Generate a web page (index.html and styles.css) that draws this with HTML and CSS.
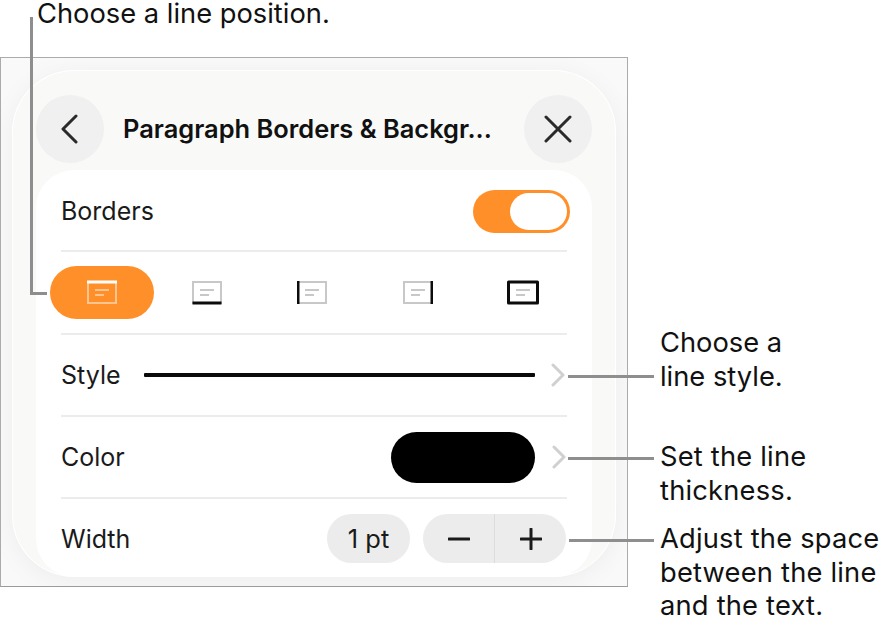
FILE: index.html
```html
<!DOCTYPE html>
<html lang="en">
<head>
<meta charset="utf-8">
<title>Paragraph Borders &amp; Background</title>
<link rel="stylesheet" href="styles.css">
</head>
<body>
<div class="page">
  <div class="frame">
    <div class="sheet">
      <header class="header">
        <button class="round-btn" aria-label="Back">
          <svg width="18" height="30" viewBox="0 0 18 30"><path d="M15 2 L2 15 L15 28" class="stroke-dark"/></svg>
        </button>
        <div class="title">Paragraph Borders &amp; Backgr...</div>
        <button class="round-btn" aria-label="Close">
          <svg width="28" height="28" viewBox="0 0 28 28"><path d="M2 2 L26 26 M26 2 L2 26" class="stroke-dark"/></svg>
        </button>
      </header>
      <div class="card">
        <div class="row row-first">
          <span class="label">Borders</span>
          <div class="toggle"><div class="knob"></div></div>
        </div>
        <div class="row row-icons">
          <div class="pos pos-active">
            <svg width="30" height="25" viewBox="0 0 30 25"><rect x="1" y="2" width="28" height="21" class="box-a"/><path d="M0 2 H30" class="edge-a"/><path d="M8 10 H22 M8 15 H17" class="txt-a"/></svg>
          </div>
          <div class="pos">
            <svg width="30" height="25" viewBox="0 0 30 25"><rect x="1" y="2" width="28" height="21" class="box"/><path d="M0.5 23 H29.5" class="edge"/><path d="M8 10 H22 M8 15 H17" class="txt"/></svg>
          </div>
          <div class="pos">
            <svg width="30" height="25" viewBox="0 0 30 25"><rect x="1" y="2" width="28" height="21" class="box"/><path d="M1 1 V24" class="edge"/><path d="M8 10 H22 M8 15 H17" class="txt"/></svg>
          </div>
          <div class="pos">
            <svg width="30" height="25" viewBox="0 0 30 25"><rect x="1" y="2" width="28" height="21" class="box"/><path d="M29 1 V24" class="edge"/><path d="M8 10 H22 M8 15 H17" class="txt"/></svg>
          </div>
          <div class="pos">
            <svg width="32" height="25" viewBox="0 0 32 25"><rect x="1.5" y="2" width="29" height="21" class="box-all"/><path d="M9 10 H23 M9 15 H18" class="txt"/></svg>
          </div>
        </div>
        <div class="row">
          <span class="label label-style">Style</span>
          <div class="line-sample"></div>
          <svg class="chev" width="15" height="24" viewBox="0 0 15 24"><path d="M2 2 L12 12 L2 22"/></svg>
        </div>
        <div class="row">
          <span class="label">Color</span>
          <div class="swatch"></div>
          <svg class="chev" width="15" height="24" viewBox="0 0 15 24"><path d="M2 2 L12 12 L2 22"/></svg>
        </div>
        <div class="row row-last">
          <span class="label">Width</span>
          <div class="value">1 pt</div>
          <div class="stepper">
            <div class="step">
              <svg width="22" height="22" viewBox="0 0 22 22"><path d="M1 11 H21" class="stroke-step"/></svg>
            </div>
            <div class="step step-plus">
              <svg width="22" height="22" viewBox="0 0 22 22"><path d="M1 11 H21 M11 1 V21" class="stroke-step"/></svg>
            </div>
          </div>
        </div>
      </div>
    </div>
  </div>

  <div class="callout callout-pos">Choose a line position.</div>
  <div class="callout callout-style">Choose a<br>line style.</div>
  <div class="callout callout-color">Set the line<br>thickness.</div>
  <div class="callout callout-width">Adjust the space<br>between the line<br>and the text.</div>

  <div class="leader leader-v"></div>
  <div class="leader leader-h0"></div>
  <div class="leader leader-h1"></div>
  <div class="leader leader-h2"></div>
  <div class="leader leader-h3"></div>
</div>
</body>
</html>
```

FILE: styles.css
```css
* { box-sizing: border-box; }
html, body { margin: 0; padding: 0; background: #fff; }
body { font-family: Inter, "Liberation Sans", sans-serif; color: #111; }
.page { position: relative; width: 888px; height: 628px; padding-top: 57px; overflow: hidden; }

.frame {
  width: 628px; height: 530px;
  border: 1px solid #ababab;
  border-bottom-color: #9b9b9b;
  padding: 12px 11px 0;
  background: #f9f9f9;
  overflow: hidden;
}
.sheet {
  height: 507px;
  border-radius: 62px;
  background: #f9f9f8;
  box-shadow: inset 0 0 0 1px #fff, 0 4px 26px rgba(0, 0, 0, 0.05);
  padding: 25px 24px 0;
  overflow: hidden;
}
.header { display: flex; align-items: center; height: 68px; }
.round-btn {
  width: 68px; height: 68px; flex: none;
  border: 0; padding: 0; border-radius: 50%;
  background: #f0f0f0;
  display: flex; align-items: center; justify-content: center;
}
.title { flex: 1; margin-left: 19px; padding-bottom: 2px; font-size: 25.45px; font-weight: 600; white-space: nowrap; }
.stroke-dark { fill: none; stroke: #2a2a2a; stroke-width: 3; stroke-linecap: round; stroke-linejoin: round; }

.card {
  margin-top: 7px; height: 407px;
  background: #fff;
  border-radius: 38px;
  padding: 0 25px;
}
.row {
  display: flex; align-items: center;
  height: 82px;
  border-top: 2px solid #ececec;
}
.row-first { height: 80px; padding-top: 2px; border-top: 0; justify-content: space-between; }
.row-icons { height: 83px; margin-left: -11px; padding-top: 2px; border-top: 0; position: relative; }
.row-icons::before { content: ""; position: absolute; left: 11px; right: 0; top: 0; height: 2px; background: #ececec; }
.row-last { height: 81px; }
.label { font-size: 25px; font-weight: 400; color: #1a1a1a; }
.label-style { width: 83px; flex: none; }

.toggle {
  width: 97px; height: 43px; border-radius: 22px;
  background: #ff9029;
  padding: 3px;
  display: flex; justify-content: flex-end;
  margin-right: -3px;
}
.knob { width: 57px; height: 37px; border-radius: 19px; background: #fff; }

.pos { width: 104px; height: 53px; border-radius: 27px; display: flex; align-items: center; justify-content: center; flex: none; margin-right: 1.5px; }
.pos-active { background: #ff9029; margin-right: 0.5px; }
.box { fill: none; stroke: #c8c8c8; stroke-width: 2; }
.box-a { fill: none; stroke: #ffc48f; stroke-width: 2; }
.box-all { fill: none; stroke: #0c0c0c; stroke-width: 3; stroke-linejoin: round; }
.edge { fill: none; stroke: #0c0c0c; stroke-width: 3; }
.edge-a { fill: none; stroke: #fff; stroke-width: 3; }
.txt { fill: none; stroke: #c8c8c8; stroke-width: 2; }
.txt-a { fill: none; stroke: #ffc48f; stroke-width: 2; }

.line-sample { width: 391px; height: 4px; background: #0a0a0a; flex: none; border-radius: 1px; }
.chev { flex: none; margin-left: 16px; fill: none; stroke: #d0d0d0; stroke-width: 3; stroke-linecap: round; stroke-linejoin: round; }
.swatch { width: 144px; height: 51px; border-radius: 26px; background: #000; margin-left: auto; margin-right: 1px; }

.value {
  width: 83px; height: 49px; border-radius: 25px;
  background: #ececec;
  margin-left: auto; margin-right: 13px;
  display: flex; align-items: center; justify-content: center;
  font-size: 25.5px; color: #1a1a1a;
}
.stepper { display: flex; width: 143px; height: 49px; border-radius: 25px; background: #ececec; margin-right: 1px; }
.step { flex: 1; display: flex; align-items: center; justify-content: center; }
.step-plus { border-left: 1px solid #dcdcdc; }
.stroke-step { fill: none; stroke: #1a1a1a; stroke-width: 3; stroke-linecap: round; }

.callout { position: absolute; font-size: 27.3px; line-height: 33.5px; color: #111; white-space: nowrap; }
.callout-pos { left: 37px; top: 0; line-height: 27px; }
.callout-style { left: 660px; top: 326px; }
.callout-color { left: 660px; top: 440px; letter-spacing: 0.2px; }
.callout-width { left: 660px; top: 522px; letter-spacing: 0.2px; }

.leader { position: absolute; background: #8e8e8e; }
.leader-v { left: 30px; top: 17px; width: 3px; height: 278px; }
.leader-h0 { left: 30px; top: 292px; width: 17px; height: 3px; }
.leader-h1 { left: 568px; top: 375px; width: 86px; height: 3px; }
.leader-h2 { left: 568px; top: 457px; width: 86px; height: 3px; }
.leader-h3 { left: 569px; top: 539px; width: 85px; height: 3px; }
```
